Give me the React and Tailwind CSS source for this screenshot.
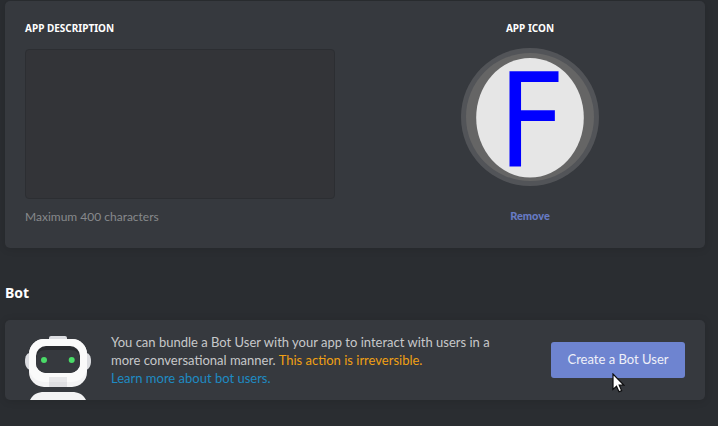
import React, { useState } from "react";

const AppIcon = () => (
  <svg viewBox="0 0 138 138" className="w-[138px] h-[138px] overflow-visible" role="img" aria-label="App icon">
    <circle cx="69" cy="69" r="69" fill="#525458" />
    <circle cx="69" cy="69" r="64" fill="#656565" />
    <ellipse cx="69" cy="69.7" rx="53.8" ry="59.8" fill="#e6e6e6" />
    <text
      x="37"
      y="117.5"
      fontSize="130"
      fill="#0000ff"
      fontFamily="'DejaVu Sans Condensed', 'DejaVu Sans', sans-serif"
    >
      F
    </text>
  </svg>
);

const BotIcon = () => (
  <svg viewBox="0 0 66 64" className="w-[66px] h-16 shrink-0" aria-hidden="true">
    <path d="M24 3V2a2 2 0 0 1 2-2h14a2 2 0 0 1 2 2v1z" fill="#dcdde1" />
    <path d="M5 17C2 17 0 20 0 25s2 8 5 9z" fill="#dcdde1" />
    <path d="M61 17c3 0 5 3 5 8s-2 8-5 9z" fill="#dcdde1" />
    <rect x="4" y="3" width="58" height="48" rx="15" fill="#f3f3f4" />
    <path d="M19 3h28a15 15 0 0 1 15 15v13a15 15 0 0 1-15 15H19A15 15 0 0 1 4 31V18A15 15 0 0 1 19 3z" fill="#fafafa" />
    <rect x="11" y="10" width="44" height="27" rx="10" fill="#292b2f" />
    <path d="M11 24c0-7 4-10 10-10h24c6 0 10 3 10 10v3a10 10 0 0 1-10 10H21a10 10 0 0 1-10-10z" fill="#36393e" />
    <circle cx="19" cy="24" r="3" fill="#4adb68" />
    <circle cx="46.700" cy="24" r="3" fill="#4adb68" />
    <path d="M24 41h18v5H24z" fill="#e7e7e9" />
    <path d="M24 46h18v5H24z" fill="#dfdfe2" />
    <path d="M5 64c3-6 8-8 14-8h28c6 0 11 2 14 8z" fill="#f3f3f4" />
  </svg>
);

const Cursor = () => (
  <svg
    viewBox="0 0 13 20"
    className="absolute left-[61px] top-[31px] w-[13px] h-5 pointer-events-none"
    aria-hidden="true"
  >
    <path
      d="M1 1v15.500l3.500-3.200L7 18.800l2.600-1.200L7.200 12.200h4.600z"
      fill="#fff"
      stroke="#0b0b0c"
      strokeWidth="1.200"
    />
  </svg>
);

const App = () => {
  const [description, setDescription] = useState("");

  return (
    <main className="min-h-screen bg-[#2a2d31] pt-px pl-[5px] pr-[13px] font-['Lato',sans-serif] text-[13px]">
      {/* App details */}
      <section className="grid grid-cols-2 gap-10 px-5 pt-[19px] pb-[21px] rounded-[5px] bg-[#36393e] shadow-[0_1px_8px_rgba(0,0,0,0.12)]">
        <div className="flex flex-col items-start">
          <label
            htmlFor="description"
            className="font-['Noto_Sans',sans-serif] text-[10px] leading-4 font-bold text-white uppercase"
          >
            App Description
          </label>
          <textarea
            id="description"
            maxLength={400}
            className="block w-full h-[150px] mt-[13px] p-2 rounded border border-[#2c2e32] bg-[#333438] text-gray-300 resize-none outline-none"
            value={description}
            onChange={(e) => setDescription(e.target.value)}
          />
          <p className="mt-2 text-xs leading-5 text-[#87898c]">
            Maximum 400 characters
          </p>
        </div>
        <div className="flex flex-col items-center">
          <h2 className="mb-3 font-['Noto_Sans',sans-serif] text-[10px] leading-4 font-bold text-white uppercase">
            App Icon
          </h2>
          <AppIcon />
          <button
            type="button"
            className="mt-5 text-[11px] leading-5 font-black text-[#677bc4]"
          >
            Remove
          </button>
        </div>
      </section>

      {/* Bot */}
      <h2 className="mt-[35px] mb-[17px] font-['Noto_Sans',sans-serif] text-sm leading-5 font-bold text-white">
        Bot
      </h2>
      <section className="flex items-start px-5 rounded-[5px] bg-[#36393e] shadow-[0_1px_8px_rgba(0,0,0,0.12)]">
        <div className="pt-4">
          <BotIcon />
        </div>
        <div className="flex-1 pl-5 pt-[13px] pr-10 leading-[18px] text-[#c7c8ca]">
          <p>
            You can bundle a Bot User with your app to interact with users in a
            more conversational manner.{" "}
            <span className="text-[#f0a014]">This action is irreversible.</span>
          </p>
          <a href="#bot-users" className="text-[#1e8bc3]">
            Learn more about bot users.
          </a>
        </div>
        <div className="relative self-center">
          <button
            type="button"
            className="w-[134px] h-9 rounded-[3px] bg-[#6e84d0] text-[#eef0f8] whitespace-nowrap"
          >
            Create a Bot User
          </button>
          <Cursor />
        </div>
      </section>
    </main>
  );
};

export default App;
